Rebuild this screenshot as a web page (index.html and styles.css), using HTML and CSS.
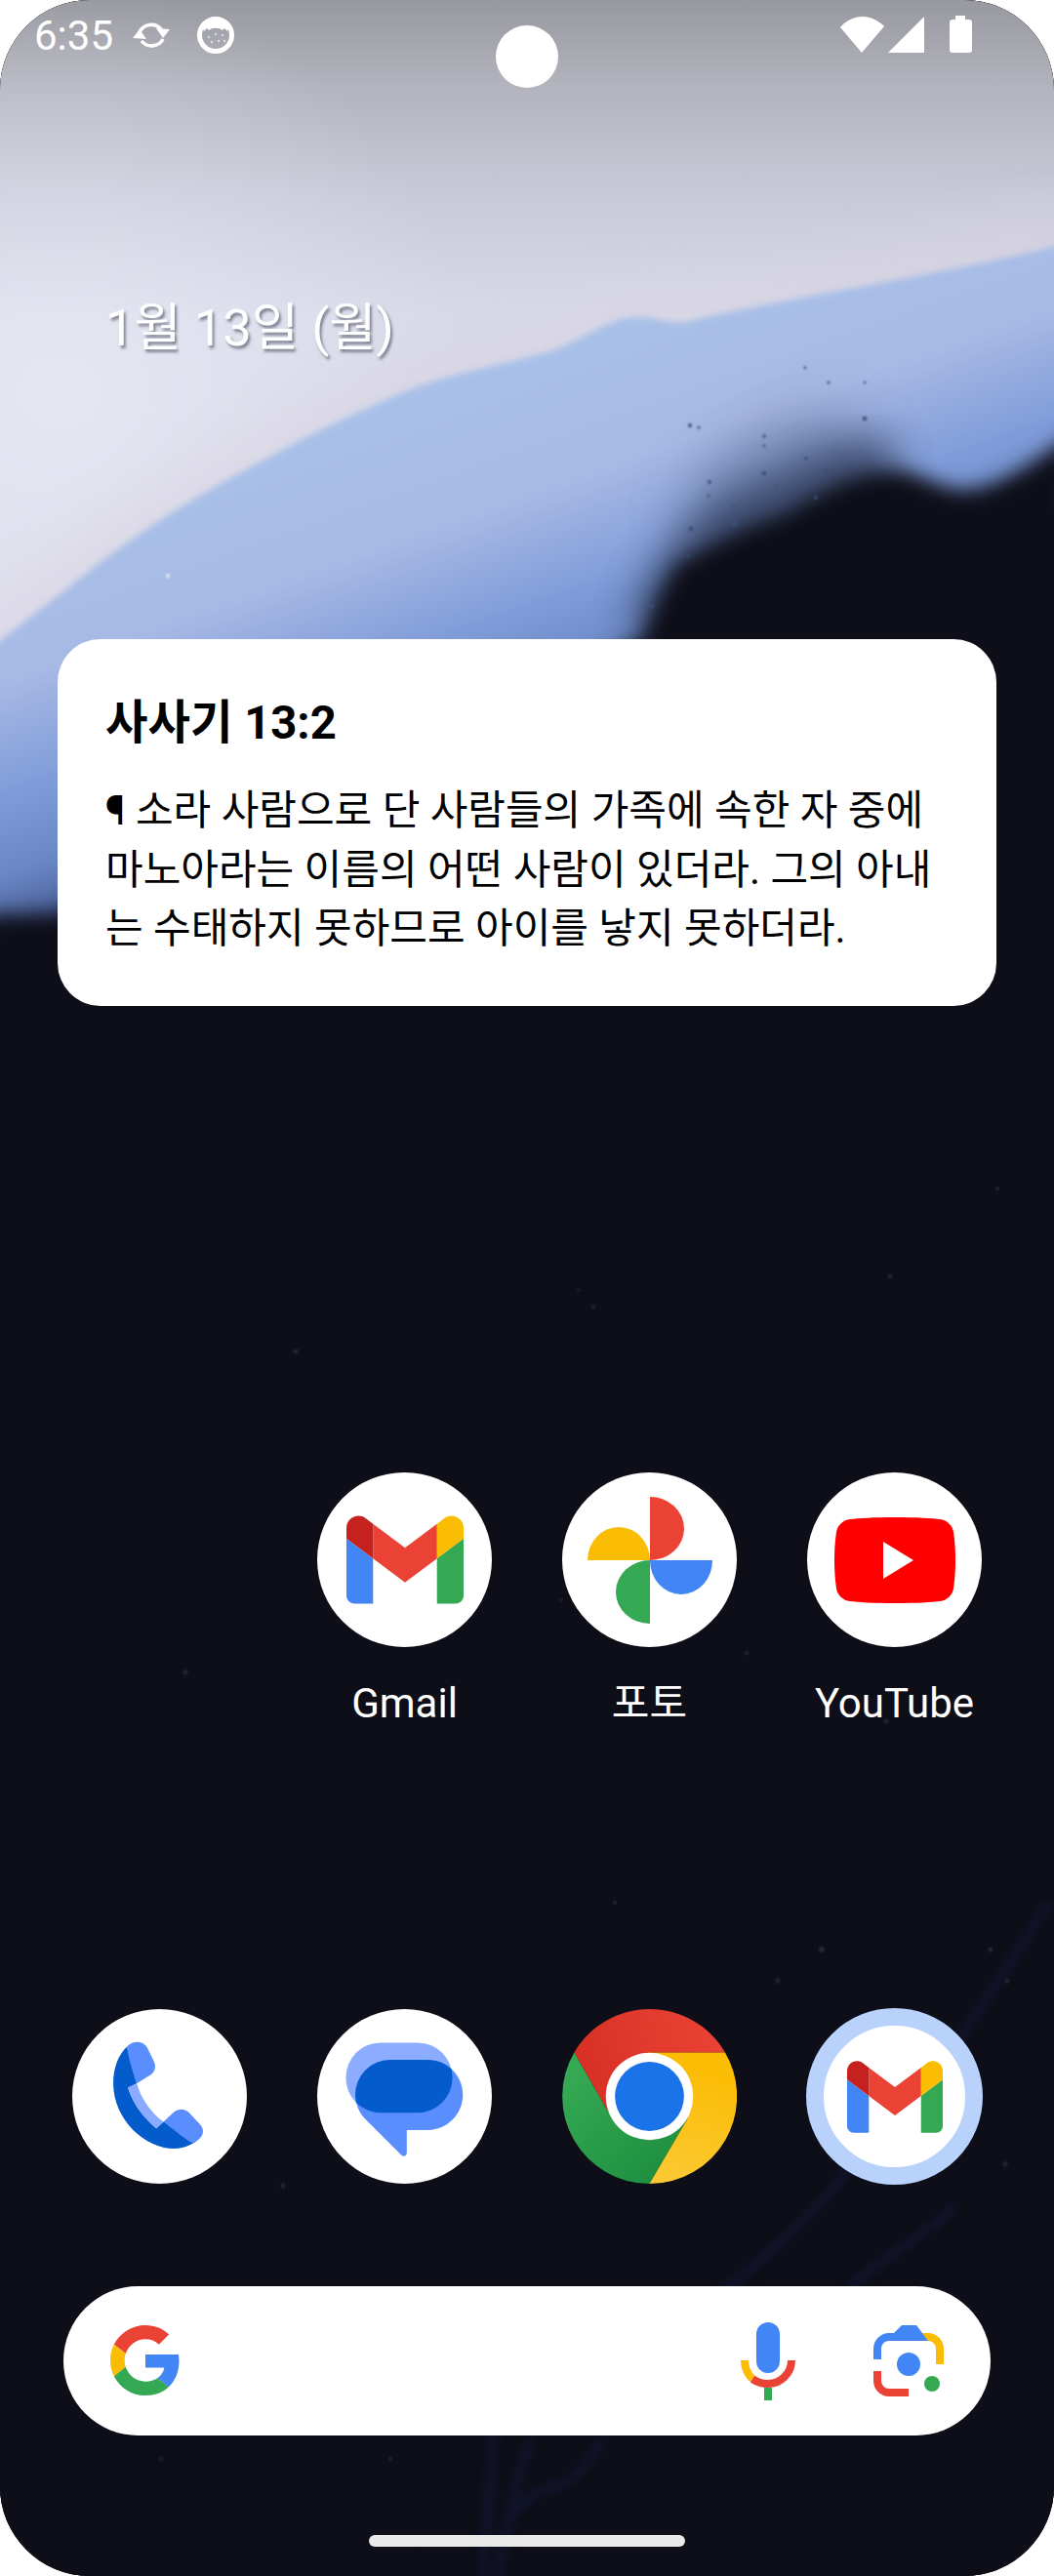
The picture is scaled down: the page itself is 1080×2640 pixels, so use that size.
FILE: index.html
```html
<!DOCTYPE html>
<html lang="ko">
<head>
<meta charset="utf-8">
<title>Home screen</title>
<link rel="stylesheet" href="styles.css">
</head>
<body>
<svg class="defs" width="0" height="0" aria-hidden="true">
  <defs>
    <symbol id="gmail" viewBox="52 42 88 66">
      <path fill="#4285f4" d="M58 108h14V74L52 59v43c0 3.32 2.69 6 6 6"/>
      <path fill="#34a853" d="M120 108h14c3.32 0 6-2.69 6-6V59l-20 15"/>
      <path fill="#fbbc04" d="M120 48v26l20-15v-8c0-7.42-8.47-11.65-14.4-7.2"/>
      <path fill="#ea4335" d="M72 74V48l24 18 24-18v26L96 92"/>
      <path fill="#c5221f" d="M52 51v8l20 15V48l-5.6-4.2c-5.94-4.45-14.4-.22-14.4 7.2"/>
    </symbol>
  </defs>
</svg>
<main class="screen">
  <svg class="wall" viewBox="0 0 1080 2640" width="1080" height="2640" aria-hidden="true">
    <defs>
      <linearGradient id="sky" gradientUnits="userSpaceOnUse" x1="0" y1="0" x2="0" y2="720">
        <stop offset="0" stop-color="#98989f"/>
        <stop offset=".125" stop-color="#b3b4bd"/>
        <stop offset=".28" stop-color="#c9cad8"/>
        <stop offset=".45" stop-color="#d8dae8"/>
        <stop offset="1" stop-color="#dcdcea"/>
      </linearGradient>
      <radialGradient id="skyl" gradientUnits="userSpaceOnUse" cx="60" cy="400" r="420">
        <stop offset="0" stop-color="#eef0fa" stop-opacity=".55"/>
        <stop offset="1" stop-color="#eef0fa" stop-opacity="0"/>
      </radialGradient>
      <linearGradient id="blue" gradientUnits="userSpaceOnUse" x1="600" y1="250" x2="760" y2="700">
        <stop offset=".2" stop-color="#a8c0e8"/>
        <stop offset=".47" stop-color="#a7b9e5"/>
        <stop offset=".7" stop-color="#7f9bd8"/>
        <stop offset=".86" stop-color="#6a86c4"/>
        <stop offset="1" stop-color="#43588f"/>
      </linearGradient>
      <filter id="b2" x="-5%" y="-5%" width="110%" height="110%" color-interpolation-filters="sRGB"><feGaussianBlur stdDeviation="3"/></filter>
      <filter id="b8" x="-5%" y="-5%" width="110%" height="110%" color-interpolation-filters="sRGB"><feGaussianBlur stdDeviation="10"/></filter>
      <filter id="b20" x="-30%" y="-30%" width="160%" height="160%" color-interpolation-filters="sRGB"><feGaussianBlur stdDeviation="20"/></filter>
      <filter id="b30" x="-40%" y="-40%" width="180%" height="180%" color-interpolation-filters="sRGB"><feGaussianBlur stdDeviation="30"/></filter>
      <filter id="b3" x="-10%" y="-10%" width="120%" height="120%" color-interpolation-filters="sRGB"><feGaussianBlur stdDeviation="5"/></filter>
      <filter id="b1" x="-10%" y="-10%" width="120%" height="120%" color-interpolation-filters="sRGB"><feGaussianBlur stdDeviation="1"/></filter>
    </defs>
    <rect width="1080" height="2640" fill="#0e0e18"/>
    <rect width="1080" height="720" fill="url(#sky)"/>
    <rect width="700" height="720" fill="url(#skyl)"/>
    <path d="M-20 670 L69 603 C140 545 205 505 275 469 C320 443 365 423 413 402 C465 380 530 372 572 357 C600 346 625 326 650 325 C670 324 685 332 702 330 C830 300 950 285 1100 248" fill="none" stroke="#d9d3e2" stroke-width="40" filter="url(#b30)"/>
    <path d="M-20 672 L69 603 C140 545 205 505 275 469 C320 443 365 423 413 402 C465 380 530 372 572 357 C600 346 625 326 650 325 C670 324 685 332 702 330 C830 300 950 285 1100 248 V1000 H-20 Z" fill="url(#blue)" filter="url(#b2)"/>
    <ellipse cx="800" cy="500" rx="105" ry="58" fill="#33425f" opacity=".4" filter="url(#b30)" transform="rotate(-28 800 500)"/>
    <path d="M665 650 C680 610 695 580 725 555 C760 525 805 520 835 500 C860 485 885 475 915 478" fill="none" stroke="#25304a" stroke-width="46" opacity=".75" filter="url(#b20)"/>
    <path d="M-20 938 L59 936 L657 655 C672 620 682 595 693 580 C712 566 722 562 740 552 C770 535 800 530 830 510 C860 495 890 478 925 483 C950 488 965 502 990 502 C1020 500 1050 480 1100 445 V1200 H-20 Z" fill="#0e0e18" filter="url(#b8)"/>
    <rect y="1100" width="1080" height="1540" fill="#0e0e18"/>
    <g fill="#3e5078" filter="url(#b1)">
      <circle cx="707" cy="436" r="2"/><circle cx="716" cy="438" r="1.600"/><circle cx="849" cy="392" r="1.500"/>
      <circle cx="886" cy="392" r="1.300"/><circle cx="825" cy="377" r="1.400"/>
      <circle cx="886" cy="429" r="2.200"/><circle cx="783" cy="447" r="1.800"/><circle cx="783" cy="457" r="1.500"/>
      <circle cx="783" cy="485" r="2.200"/><circle cx="727" cy="494" r="1.900"/><circle cx="726" cy="508" r="1.600"/>
      <circle cx="826" cy="470" r="1.900"/><circle cx="847" cy="482" r="2"/><circle cx="836" cy="510" r="1.900"/>
      <circle cx="753" cy="537" r="2.400"/><circle cx="708" cy="542" r="2.400"/><circle cx="752" cy="519" r="1.600"/>
      <circle cx="795" cy="498" r="1.600"/><circle cx="668" cy="621" r="1.900"/><circle cx="705" cy="570" r="1.600"/>
    </g>
    <circle cx="172" cy="590" r="2.500" fill="#d5def2" filter="url(#b1)"/>
    <g fill="none" stroke="#131a3b" filter="url(#b3)" stroke-width="9" opacity=".6">
      <path d="M1075 1950 C1040 2000 1020 2040 985 2085 C960 2125 900 2175 860 2235 C830 2275 780 2315 740 2350"/>
      <path d="M980 2260 C950 2290 900 2315 870 2345"/>
      <path d="M545 2500 C530 2530 525 2570 510 2640"/>
      <path d="M505 2490 C505 2530 500 2570 495 2640"/>
      <path d="M618 2500 C600 2530 580 2550 560 2550 C535 2560 520 2580 515 2600"/>
    </g>
    <g fill="#2a2a34" filter="url(#b1)">
      <circle cx="303" cy="1385" r="2.600"/><circle cx="190" cy="1714" r="2.400"/><circle cx="608" cy="1339" r="2"/>
      <circle cx="912" cy="1308" r="2.400"/><circle cx="1022" cy="1218" r="2"/><circle cx="593" cy="1322" r="1.600"/>
      <circle cx="842" cy="1998" r="3"/><circle cx="797" cy="2030" r="2.400"/><circle cx="1015" cy="1998" r="2.400"/>
      <circle cx="1032" cy="2030" r="2.400"/><circle cx="1030" cy="2218" r="2.400"/><circle cx="290" cy="2240" r="2.400"/>
      <circle cx="427" cy="2606" r="2.400"/><circle cx="630" cy="1950" r="2"/><circle cx="908" cy="1764" r="2.200"/>
      <circle cx="765" cy="1694" r="2.200"/><circle cx="575" cy="1640" r="1.600"/><circle cx="120" cy="2080" r="2"/>
      <circle cx="400" cy="2520" r="1.800"/><circle cx="165" cy="2520" r="1.800"/>
    </g>
  </svg>

  <div class="camera"></div>

  <header class="status">
    <div class="status-group">
      <span class="time">6:35</span>
      <svg class="ic-sync" viewBox="0 0 38 30" width="38" height="30" aria-hidden="true">
        <path d="M7 12 A13 12.500 0 0 1 29 9" fill="none" stroke="#fff" stroke-width="3.600"/>
        <path d="M24 8 L38 9 L31 18 Z" fill="#fff"/>
        <path d="M31 19 A13 12.500 0 0 1 9 21" fill="none" stroke="#fff" stroke-width="3.600"/>
        <path d="M0 18 L14 19 L7 9 Z" fill="#fff"/>
      </svg>
      <svg class="ic-cat" viewBox="0 0 38 38" width="38" height="38" aria-hidden="true">
        <circle cx="19" cy="19" r="16.500" fill="none" stroke="#fff" stroke-width="5"/>
        <path d="M5 10 C9 3 29 3 33 10 L31 15 L28 12 L26 14 C22 11 16 11 12 14 L10 12 L7 15 Z" fill="#fff"/>
        <g fill="#fff" opacity=".6">
          <circle cx="12" cy="21" r="1.200"/><circle cx="19" cy="18" r="1.200"/><circle cx="26" cy="19" r="1.200"/>
          <circle cx="15" cy="26" r="1.200"/><circle cx="22" cy="25" r="1.200"/><circle cx="28" cy="25" r="1.200"/>
        </g>
      </svg>
    </div>
    <div class="status-group end">
      <svg viewBox="0 0 45 37" width="45" height="37" aria-hidden="true">
        <path d="M0 11 C6 4 14 0 22.500 0 C31 0 39 4 45 10 L22 37 Z" fill="#fff"/>
      </svg>
      <svg viewBox="0 0 37 37" width="37" height="37" aria-hidden="true">
        <path d="M37 0 V37 H0 Z" fill="#fff"/>
      </svg>
      <svg class="ic-batt" viewBox="0 0 23 38" width="23" height="38" aria-hidden="true">
        <path d="M6 0 H16 V4 H20 A3 3 0 0 1 23 7 V35 A3 3 0 0 1 20 38 H3 A3 3 0 0 1 0 35 V7 A3 3 0 0 1 3 4 H6 Z" fill="#fff"/>
      </svg>
    </div>
  </header>

  <div class="date">1월 13일 (월)</div>

  <section class="verse">
    <h1 class="verse-title">사사기 13:2</h1>
    <p class="verse-text">¶ 소라 사람으로 단 사람들의 가족에 속한 자 중에 마노아라는 이름의 어떤 사람이 있더라. 그의 아내는 수태하지 못하므로 아이를 낳지 못하더라.</p>
  </section>

  <section class="apps top">
    <div class="app slot-2">
      <div class="bubble">
        <svg width="120" height="91" aria-hidden="true"><use href="#gmail"/></svg>
      </div>
      <span class="label">Gmail</span>
    </div>
    <div class="app">
      <div class="bubble">
        <svg viewBox="-64 -65 128 130" width="128" height="130" aria-hidden="true">
          <path d="M0 0 H-64 A32 34 0 0 1 0 0 Z" fill="#fbbc04"/>
          <path d="M0 0 V-65 A35 32.500 0 0 1 0 0 Z" fill="#ea4335"/>
          <path d="M0 0 H64 A32 35 0 0 1 0 0 Z" fill="#4285f4"/>
          <path d="M0 0 V65 A35 32.500 0 0 1 0 0 Z" fill="#34a853"/>
        </svg>
      </div>
      <span class="label">포토</span>
    </div>
    <div class="app">
      <div class="bubble">
        <svg viewBox="0 0 124 88" width="124" height="88" aria-hidden="true">
          <path d="M62 0 C85 0 100 1 108 2 C116 3 121 9 122 15 C123.500 25 124 35 124 44 C124 53 123.500 63 122 73 C121 79 116 85 108 86 C100 87 85 88 62 88 C39 88 24 87 16 86 C8 85 3 79 2 73 C.5 63 0 53 0 44 C0 35 .5 25 2 15 C3 9 8 3 16 2 C24 1 39 0 62 0Z" fill="#ff0000"/>
          <path d="M50 25 L81 44 L50 63 Z" fill="#fff"/>
        </svg>
      </div>
      <span class="label">YouTube</span>
    </div>
  </section>

  <section class="apps dock">
    <div class="app">
      <div class="bubble">
        <svg viewBox="72 57 536 536" width="179" height="179" aria-hidden="true">
          <path d="M240 172 C212 198 198 240 198 285 C198 395 295 485 385 485 C418 485 448 472 468 445 L352 403 L330 423 C285 385 258 345 243 298 L270 285 Z" fill="#045bcc"/>
          <path d="M243 298 L270 285 C285 335 315 375 352 403 L330 423 C285 385 258 345 243 298 Z" fill="#8aabff"/>
          <path d="M240 172 C248 162 262 157 275 158 C288 159 298 168 302 175 L323 218 C330 235 326 250 312 259 L270 285 C258 250 245 210 240 172 Z" fill="#5a8eff"/>
          <path d="M352 403 L385 372 C398 362 415 362 428 372 L465 412 C476 425 476 440 465 452 C458 460 450 466 440 467 C425 462 385 428 352 403 Z" fill="#5a8eff"/>
        </svg>
      </div>
    </div>
    <div class="app">
      <div class="bubble">
        <svg viewBox="825 57 536 536" width="179" height="179" aria-hidden="true">
          <defs><clipPath id="backcap"><rect x="913" y="160" width="327" height="215" rx="107"/></clipPath></defs>
          <rect x="913" y="160" width="327" height="215" rx="107" fill="#8cadff"/>
          <path d="M1049 213 H1165 C1224 213 1272 261 1272 320 C1272 380 1224 428 1165 428 H1100 V498 C1100 508 1090 512 1083 505 L975 397 C955 378 942 350 942 320 C942 261 990 213 1049 213 Z" fill="#5a8eff"/>
          <rect x="942" y="213" width="330" height="215" rx="107" fill="#045bcc" clip-path="url(#backcap)"/>
        </svg>
      </div>
    </div>
    <div class="app">
      <div class="bubble chrome">
        <svg viewBox="-268 -268 536 536" width="179" height="179" aria-hidden="true">
          <defs>
            <linearGradient id="cr" gradientUnits="userSpaceOnUse" x1="-200" y1="-80" x2="200" y2="-220">
              <stop offset="0" stop-color="#d93025"/><stop offset="1" stop-color="#ea4335"/>
            </linearGradient>
            <linearGradient id="cg" gradientUnits="userSpaceOnUse" x1="-220" y1="-60" x2="50" y2="250">
              <stop offset="0" stop-color="#34a853"/><stop offset="1" stop-color="#1e8e3e"/>
            </linearGradient>
            <linearGradient id="cy" gradientUnits="userSpaceOnUse" x1="150" y1="-80" x2="60" y2="260">
              <stop offset="0" stop-color="#fbbc04"/><stop offset="1" stop-color="#fcc934"/>
            </linearGradient>
          </defs>
          <path d="M-231 -135 A268 268 0 0 1 232 -135 H0 V0 L-128 45 Z" fill="url(#cr)"/>
          <path d="M-231 -135 A268 268 0 0 0 0 268 L117 68 L0 0 L-128 45 Z" fill="url(#cg)"/>
          <path d="M0 -135 H232 A268 268 0 0 1 0 268 L117 68 L0 0 Z" fill="url(#cy)"/>
          <circle r="134" fill="#fff"/>
          <circle r="106" fill="#1a73e8"/>
        </svg>
      </div>
    </div>
    <div class="app">
      <div class="bubble ring">
        <svg width="98" height="74" aria-hidden="true"><use href="#gmail"/></svg>
      </div>
    </div>
  </section>

  <section class="search">
    <svg class="ic-g" viewBox="0 0 48 48" width="72" height="72" aria-hidden="true">
      <path fill="#EA4335" d="M24 9.500c3.540 0 6.710 1.220 9.210 3.600l6.850-6.850C35.900 2.380 30.470 0 24 0 14.620 0 6.510 5.380 2.560 13.220l7.980 6.190C12.430 13.720 17.740 9.500 24 9.500z"/>
      <path fill="#4285F4" d="M46.980 24.550c0-1.570-.15-3.090-.38-4.550H24v9.020h12.940c-.58 2.960-2.260 5.480-4.780 7.180l7.730 6c4.510-4.180 7.090-10.360 7.090-17.650z"/>
      <path fill="#FBBC05" d="M10.530 28.590c-.48-1.450-.76-2.990-.76-4.590s.27-3.140.76-4.590l-7.980-6.190C.92 16.460 0 20.120 0 24c0 3.880.92 7.540 2.560 10.780l7.970-6.190z"/>
      <path fill="#34A853" d="M24 48c6.480 0 11.930-2.130 15.890-5.810l-7.730-6c-2.150 1.450-4.920 2.300-8.160 2.300-6.260 0-11.570-4.220-13.470-9.910l-7.980 6.190C6.510 42.620 14.620 48 24 48z"/>
    </svg>
    <svg class="ic-mic" viewBox="0 0 56 80" width="56" height="80" aria-hidden="true">
      <rect x="16" width="24" height="52" rx="12" fill="#4285f4"/>
      <path d="M4 39 C4 47 7 53 12 58" fill="none" stroke="#fbbc04" stroke-width="8"/>
      <path d="M12 58 C16 61 21 63 28 63 C41 63 52 52 52 39" fill="none" stroke="#ea4335" stroke-width="8"/>
      <rect x="24" y="67" width="8" height="13" fill="#34a853"/>
    </svg>
    <svg class="ic-lens" viewBox="0 0 72 73" width="72" height="73" aria-hidden="true">
      <path d="M48 12 H56 A12 12 0 0 1 68 24 V40" fill="none" stroke="#fbbc04" stroke-width="8"/>
      <path d="M4 35 V24 A12 12 0 0 1 16 12 H22" fill="none" stroke="#4285f4" stroke-width="8"/>
      <path d="M16 8 H21 L29 0 H44 L56 16 H16 Z" fill="#4285f4"/>
      <path d="M4 47 V57 A12 12 0 0 0 16 69 H36" fill="none" stroke="#ea4335" stroke-width="8"/>
      <circle cx="36" cy="40" r="12" fill="#4285f4"/>
      <circle cx="60" cy="60" r="8" fill="#34a853"/>
    </svg>
  </section>

  <div class="handle"></div>
</main>
</body>
</html>
```
FILE: styles.css
```css
* { box-sizing: border-box; }
html, body { margin: 0; padding: 0; background: #fff; }
.defs { position: absolute; }
.screen {
  position: relative;
  width: 1080px;
  height: 2640px;
  border-radius: 92px;
  overflow: hidden;
  display: flex;
  flex-direction: column;
  font-family: Roboto, "Noto Sans CJK KR", sans-serif;
  background: #0e0e18;
}
.wall { position: absolute; left: 0; top: 0; }
.camera {
  position: absolute;
  left: 508px;
  top: 26px;
  width: 64px;
  height: 64px;
  border-radius: 50%;
  background: #fff;
}
.status {
  position: relative;
  height: 72px;
  display: flex;
  justify-content: space-between;
  align-items: flex-start;
  padding: 15px 84px 0 35px;
  color: #fff;
}
.status-group { display: flex; align-items: flex-start; }
.status-group.end { gap: 4px; padding-top: 2px; }
.time { font-size: 42px; line-height: 44px; }
.ic-sync { margin: 6px 0 0 20px; }
.ic-cat { margin: 2px 0 0 28px; }
.ic-batt { margin: -1px 0 0 22px; }
.date {
  position: relative;
  margin: 232px 0 0 108px;
  font-size: 52.5px;
  line-height: 64px;
  color: #fff;
  text-shadow: 2px 3px 3px rgba(50, 50, 70, .55);
}
.verse {
  position: relative;
  margin: 287px 59px 0;
  height: 376px;
  padding: 56px 49px 0;
  border-radius: 44px;
  background: #fff;
  color: #000;
}
.verse-title {
  margin: 0 0 30px;
  font-size: 47.25px;
  line-height: 60px;
  font-weight: 700;
}
.verse-text {
  margin: 0;
  font-size: 42px;
  line-height: 60.5px;
}
.apps {
  position: relative;
  display: grid;
  grid-template-columns: repeat(4, 251px);
  margin-left: 38px;
}
.apps.top { margin-top: 478px; }
.apps.dock { position: absolute; top: 2058px; left: 0; }
.slot-2 { grid-column: 2; }
.app { display: flex; flex-direction: column; align-items: center; color: #fff; }
.bubble {
  width: 179px;
  height: 179px;
  border-radius: 50%;
  background: #fff;
  display: flex;
  align-items: center;
  justify-content: center;
}
.bubble.ring {
  width: 181px;
  height: 181px;
  border: 18px solid #b8d2fc;
}
.dock .bubble { margin-top: 1px; }
.dock .bubble.ring { margin-top: 0; }
.dock .bubble.chrome { background: transparent; }
.label {
  margin-top: 31px;
  font-size: 42px;
  line-height: 54px;
  color: #fff;
}
.search {
  position: absolute;
  left: 65px;
  top: 2343px;
  width: 950px;
  height: 153px;
  border-radius: 77px;
  background: #fff;
}
.ic-g { position: absolute; left: 48px; top: 40px; }
.ic-mic { position: absolute; left: 694px; top: 37px; }
.ic-lens { position: absolute; left: 830px; top: 40px; }
.handle {
  position: absolute;
  left: 378px;
  top: 2598px;
  width: 324px;
  height: 12px;
  border-radius: 6px;
  background: #e9e9ea;
}
```
